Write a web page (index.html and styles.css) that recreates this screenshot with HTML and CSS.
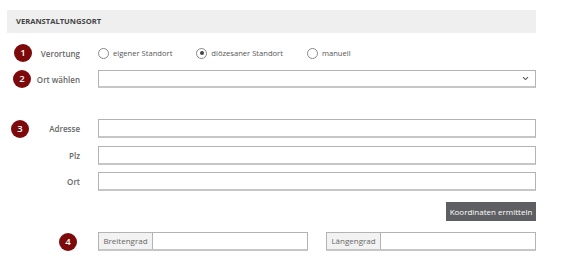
FILE: index.html
```html
<!DOCTYPE html>
<html lang="de">
<head>
  <meta charset="UTF-8" />
  <meta name="viewport" content="width=device-width, initial-scale=1.0"/>
  <title>Veranstaltungsort</title>
  <link rel="stylesheet" href="styles.css">
</head>
<body>

  <div class="section">
    <div class="section-header">VERANSTALTUNGSORT</div>

    <form class="place-form">
      <div class="row row-verortung">
        <span class="badge badge-1">1</span>
        <label class="label">Verortung</label>
        <div class="choices">
          <label><input type="radio" name="verortung" value="eigen"> eigener Standort</label>
          <label><input type="radio" name="verortung" value="dioezesan" checked> diözesaner Standort</label>
          <label><input type="radio" name="verortung" value="manuell"> manuell</label>
        </div>
      </div>

      <div class="row row-ort">
        <span class="badge badge-2">2</span>
        <label class="label">Ort wählen</label>
        <div class="select">
          <svg width="7" height="5" viewBox="0 0 7 5"><path d="M1 1.2 L3.5 3.6 L6 1.2" fill="none" stroke="#555" stroke-width="1.1"/></svg>
        </div>
      </div>

      <div class="row row-adresse">
        <span class="badge badge-3">3</span>
        <label class="label">Adresse</label>
        <input class="field" type="text">
      </div>

      <div class="row row-plz">
        <label class="label">Plz</label>
        <input class="field" type="text">
      </div>

      <div class="row row-ortname">
        <label class="label">Ort</label>
        <input class="field" type="text">
      </div>

      <div class="row row-button">
        <span class="label"></span>
        <div class="actions">
          <button class="coord-btn" type="button">Koordinaten ermitteln</button>
        </div>
      </div>

      <div class="row row-coords">
        <span class="badge badge-4">4</span>
        <span class="label"></span>
        <div class="coords">
          <div class="input-group">
            <span class="addon">Breitengrad</span>
            <input type="text">
          </div>
          <div class="input-group">
            <span class="addon">Längengrad</span>
            <input type="text">
          </div>
        </div>
      </div>
    </form>
  </div>

</body>
</html>
```

FILE: styles.css
```css
body {
  font-family: "Open Sans", sans-serif;
  font-size: 8px;
  color: #555;
  background-color: white;
  margin: 0;
  padding: 0;
}

.section {
  width: 529px;
  margin-left: 7px;
  margin-top: 10px;
}

.section-header {
  height: 23px;
  line-height: 23px;
  background: #efefef;
  padding-left: 9px;
  font-weight: 700;
  color: #444;
  font-size: 7.6px;
}

.row {
  position: relative;
  display: flex;
  align-items: center;
  height: 18px;
}

.row-verortung { margin-top: 11px; }
.row-ort { margin-top: 8px; }
.row-adresse { margin-top: 31px; height: 19px; }
.row-plz { margin-top: 8px; height: 19px; }
.row-ortname { margin-top: 7px; height: 19px; }
.row-button { margin-top: 11px; height: 19px; }
.row-coords { margin-top: 11px; height: 19px; }

.label {
  width: 73px;
  flex: none;
  text-align: right;
  margin-right: 18px;
  font-weight: 600;
  color: #666;
}

.badge {
  position: absolute;
  top: 50%;
  width: 18px;
  height: 18px;
  margin-top: -9px;
  border-radius: 50%;
  background: #7d0a0a;
  color: white;
  font-weight: 600;
  font-size: 9.5px;
  line-height: 18px;
  text-align: center;
}

.badge-1 { left: 7px; }
.badge-2 { left: 6px; }
.badge-3 { left: 4px; }
.badge-4 { left: 52px; }

.choices {
  display: flex;
  gap: 24px;
  font-size: 7.6px;
}

.choices label {
  display: flex;
  align-items: center;
  gap: 4px;
  color: #555;
}

.choices input {
  appearance: none;
  -webkit-appearance: none;
  width: 11px;
  height: 11px;
  margin: 0;
  border: 1px solid #888;
  border-radius: 50%;
  background: white;
  position: relative;
}

.choices input:checked::after {
  content: "";
  position: absolute;
  left: 2.5px;
  top: 2.5px;
  width: 4px;
  height: 4px;
  border-radius: 50%;
  background: #444;
}

.select,
.field {
  flex: 1;
  min-width: 0;
  width: 0;
  height: 100%;
  box-sizing: border-box;
  border: 1px solid #b3b3b3;
  border-bottom: 2px solid #c6c6c6;
  background: white;
  margin: 0;
  padding: 0 4px;
}

.select {
  display: flex;
  align-items: center;
  justify-content: flex-end;
  padding-right: 6px;
}

.actions {
  flex: 1;
  display: flex;
  justify-content: flex-end;
  height: 100%;
}

.coord-btn {
  height: 100%;
  width: 90px;
  padding: 0;
  background: #5e5f63;
  color: white;
  border: none;
  font-family: "Open Sans", sans-serif;
  font-size: 8px;
  cursor: pointer;
}

.coords {
  flex: 1;
  min-width: 0;
  display: flex;
  gap: 18px;
  height: 100%;
}

.input-group {
  flex: 1;
  min-width: 0;
  display: flex;
  box-sizing: border-box;
  border: 1px solid #b3b3b3;
  border-bottom: 2px solid #c6c6c6;
  background: white;
}

.addon {
  width: 53px;
  flex: none;
  background: #f2f2f2;
  border-right: 1px solid #b3b3b3;
  text-align: center;
  line-height: 16px;
  color: #666;
}

.input-group input {
  flex: 1;
  min-width: 0;
  width: 0;
  border: none;
  margin: 0;
  padding: 0 4px;
}
```
